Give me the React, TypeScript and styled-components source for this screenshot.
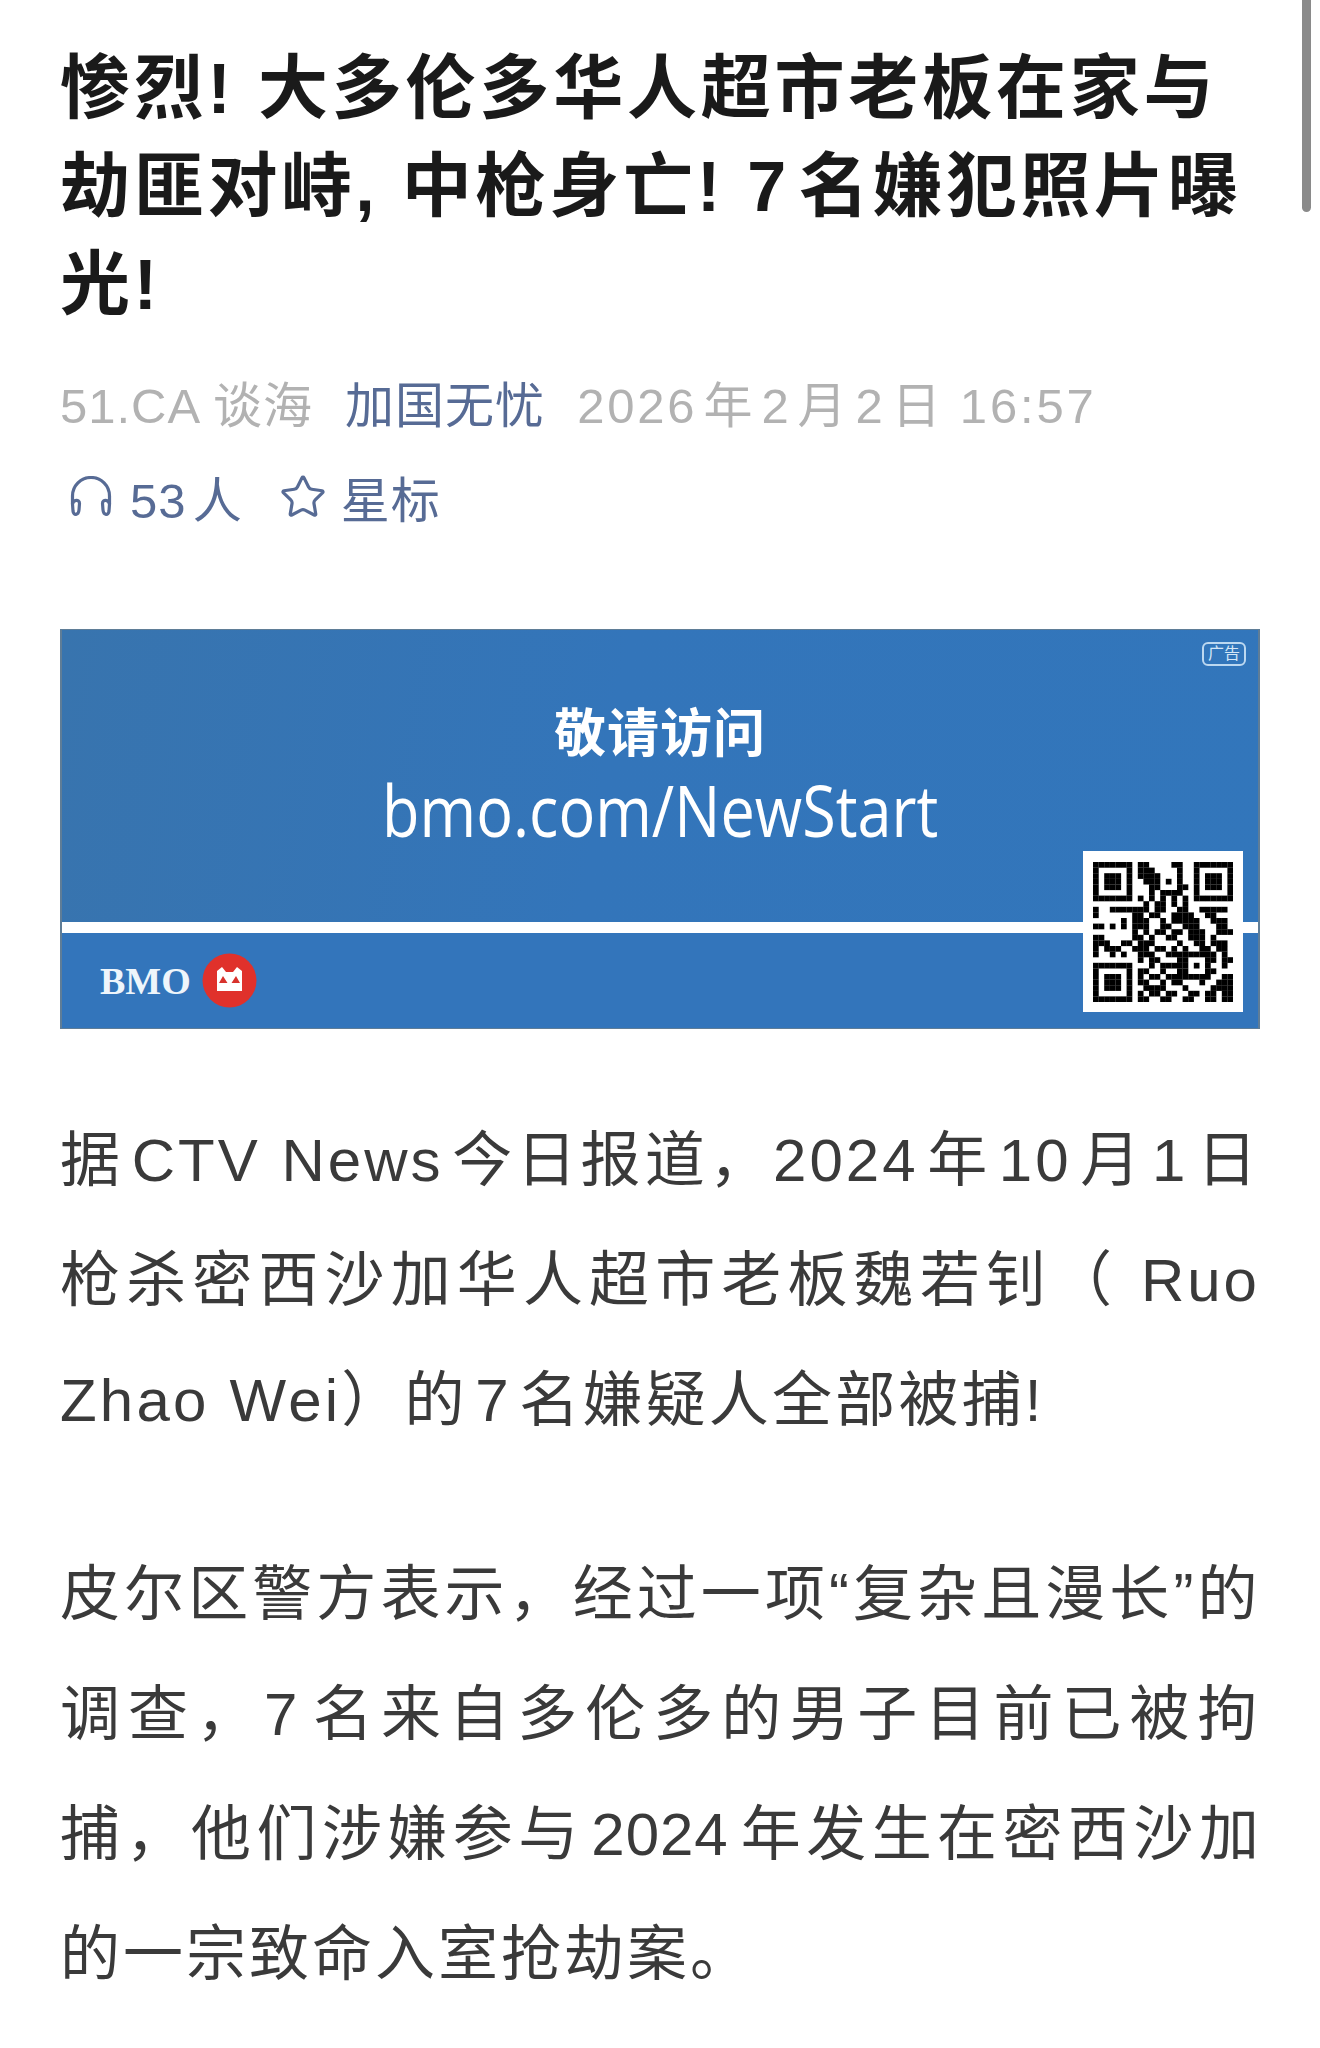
import React from 'react';
import styled, { createGlobalStyle } from 'styled-components';
import { Star } from 'lucide-react';

const GlobalStyle = createGlobalStyle`
  html, body {
    margin: 0;
    padding: 0;
    background: #fff;
    overflow: hidden;
    font-family: "Liberation Sans", "Noto Sans CJK SC", sans-serif;
    text-autospace: normal;
  }
`;

const Page = styled.div`
  position: relative;
  width: 1320px;
  height: 2048px;
  overflow: hidden;
  background: #fff;
  padding: 40px 60px 0;
  box-sizing: border-box;
`;

const ScrollThumb = styled.div`
  position: absolute;
  top: 0;
  right: 9px;
  width: 9px;
  height: 212px;
  background: #8a8a8a;
  border-radius: 0 0 5px 5px;
`;

const Title = styled.h1`
  margin: 0;
  font-size: 70px;
  line-height: 98px;
  font-weight: 700;
  letter-spacing: 3.8px;
  color: #1a1a1a;
`;

const MetaRow = styled.div`
  display: flex;
  align-items: center;
  height: 95px;
  font-size: 49px;
  letter-spacing: 1px;
  white-space: nowrap;
`;

const FirstMeta = styled(MetaRow)`
  margin-top: 20px;
`;

const MetaText = styled.span<{ $link?: boolean; $gap?: number; $spacing?: number }>`
  color: ${(p) => (p.$link ? '#576b95' : '#b2b2b2')};
  margin-right: ${(p) => p.$gap ?? 0}px;
  ${(p) => (p.$spacing ? `letter-spacing: ${p.$spacing}px;` : '')}
`;

const MetaIcon = styled.span<{ $gap: number; $left?: number }>`
  display: inline-flex;
  color: #576b95;
  margin-left: ${(p) => p.$left ?? 0}px;
  margin-right: ${(p) => p.$gap}px;
`;

const Banner = styled.div`
  position: relative;
  display: flex;
  flex-direction: column;
  height: 400px;
  margin-top: 85px;
  box-sizing: border-box;
  background: linear-gradient(100deg, #3874ae 0%, #3375ba 45%, #3276bb 100%);
  border: solid #5f7d97;
  border-width: 1px 2px;
  color: #fff;
`;

const BannerCopy = styled.div`
  height: 292px;
  display: flex;
  flex-direction: column;
  align-items: center;
  padding-top: 68px;
  box-sizing: border-box;
`;

const BannerHeading = styled.div`
  font-size: 52px;
  line-height: 72px;
  font-weight: 700;
  letter-spacing: 1px;
`;

const BannerUrl = styled.div`
  font-family: "Open Sans", "Liberation Sans", sans-serif;
  font-size: 72px;
  line-height: 78px;
  font-weight: 500;
  transform: scaleX(0.85);
  white-space: nowrap;
`;

const BannerRule = styled.div`
  height: 11px;
  background: #fff;
`;

const BannerFoot = styled.div`
  flex: 1;
  display: flex;
  align-items: center;
  padding-left: 38px;
  gap: 11px;
  background: #3375bb;
`;

const BmoWord = styled.span`
  font-family: "Liberation Serif", serif;
  font-size: 38px;
  font-weight: 700;
  color: #eef5fb;
`;

const AdBadge = styled.div`
  position: absolute;
  top: 12px;
  right: 12px;
  width: 44px;
  height: 24px;
  box-sizing: border-box;
  border: 2px solid #bcd8f0;
  border-radius: 6px;
  font-size: 16px;
  line-height: 20px;
  text-align: center;
  color: #d4e6f6;
`;

const QrCard = styled.div`
  position: absolute;
  top: 221px;
  right: 15px;
  width: 160px;
  height: 161px;
  display: flex;
  align-items: center;
  justify-content: center;
  background: #fff;
`;

const Article = styled.div`
  margin-top: 72px;
`;

const Para = styled.p`
  margin: 0 0 74px;
  font-size: 60px;
  line-height: 120px;
  color: #3a3a3a;
`;

// lines are set one by one so they break where the reference breaks
const Line = styled.span<{ $spacing: number; $fill?: boolean }>`
  display: block;
  white-space: nowrap;
  letter-spacing: ${(p) => p.$spacing}px;
  text-align: ${(p) => (p.$fill ? 'justify' : 'left')};
  text-align-last: ${(p) => (p.$fill ? 'justify' : 'left')};
`;

const Headphones = () => (
  <svg width="42" height="42" viewBox="0 0 42 42" fill="none" stroke="currentColor" strokeWidth="3.2" strokeLinecap="round" strokeLinejoin="round">
    <path d="M2.5 28 V20 A18.5 18.5 0 0 1 39.5 20 V28" />
    <path d="M2.5 28 C3 23.5 9.5 23 9.5 27.5 L9 34 C8.5 39.5 3.5 40 3 35 Z" />
    <path d="M39.5 28 C39 23.5 32.5 23 32.5 27.5 L33 34 C33.5 39.5 38.5 40 39 35 Z" />
  </svg>
);

const BmoMark = () => (
  <svg width="55" height="55" viewBox="0 0 55 55">
    <circle cx="27.5" cy="27.5" r="27" fill="#e0312b" />
    <path d="M15 18 L20 14 L24 19 H31 L35 14 L40 18 V38 H15 Z" fill="#fff" />
    <path d="M17 30 L21 23 L25.5 30 Z M29.5 30 L34 23 L38 30 Z" fill="#d8322c" />
  </svg>
);

const QR_ROWS = [
  '1111111011000011001111111',
  '1000001011100001001000001',
  '1011101011110001001011101',
  '1011101001110101001011101',
  '1011101000110001101011101',
  '1000001000101111001000001',
  '1111111010101010101111111',
  '0000000001011010100000000',
  '1001111111011001100111110',
  '1000000110110011110011000',
  '0000010111001011111001110',
  '1101010111001100111000110',
  '0000000101011011011100111',
  '1100000110100110011101000',
  '1110011011100001001101110',
  '1011100111011010100110110',
  '1001010011100111111111010',
  '0000000010110001100011011',
  '1111111000101111101010010',
  '1000001011001001100011000',
  '1011101010110111111110011',
  '1011101011001011000100111',
  '1011101001111000100001111',
  '1000001010110110011011011',
  '1111111011001100110011011',
];

const QrCode = () => (
  <svg width="140" height="140" viewBox="0 0 25 25" style={{ filter: 'blur(0.5px)' }}>
    {QR_ROWS.flatMap((row, y) =>
      row.split('').map((cell, x) =>
        cell === '1' ? <rect key={`${x}-${y}`} x={x} y={y} width="1.02" height="1.02" fill="#000" /> : null
      )
    )}
  </svg>
);

export default function App() {
  return (
    <Page>
      <GlobalStyle />
      <ScrollThumb />
      <Title>惨烈! 大多伦多华人超市老板在家与劫匪对峙, 中枪身亡! 7名嫌犯照片曝光!</Title>
      <FirstMeta>
        <MetaText $gap={32}>51.CA 谈海</MetaText>
        <MetaText $link $gap={32}>加国无忧</MetaText>
        <MetaText $spacing={2.8}>2026年2月2日 16:57</MetaText>
      </FirstMeta>
      <MetaRow>
        <MetaIcon $left={10} $gap={18}><Headphones /></MetaIcon>
        <MetaText $link $gap={36}>53人</MetaText>
        <MetaIcon $gap={14}><Star size={48} strokeWidth={1.6} /></MetaIcon>
        <MetaText $link>星标</MetaText>
      </MetaRow>
      <Banner>
        <BannerCopy>
          <BannerHeading>敬请访问</BannerHeading>
          <BannerUrl>bmo.com/NewStart</BannerUrl>
        </BannerCopy>
        <BannerRule />
        <BannerFoot>
          <BmoWord>BMO</BmoWord>
          <BmoMark />
        </BannerFoot>
        <AdBadge>广告</AdBadge>
        <QrCard><QrCode /></QrCard>
      </Banner>
      <Article>
        <Para>
          <Line $fill $spacing={3}>据CTV News今日报道，2024年10月1日</Line>
          <Line $fill $spacing={3}>枪杀密西沙加华人超市老板魏若钊（ Ruo</Line>
          <Line $spacing={3.2}>Zhao Wei）的7名嫌疑人全部被捕!</Line>
        </Para>
        <Para>
          <Line $fill $spacing={2.5}>皮尔区警方表示，经过一项“复杂且漫长”的</Line>
          <Line $fill $spacing={2.5}>调查，7名来自多伦多的男子目前已被拘</Line>
          <Line $fill $spacing={1}>捕，他们涉嫌参与2024年发生在密西沙加</Line>
          <Line $spacing={3}>的一宗致命入室抢劫案。</Line>
        </Para>
      </Article>
    </Page>
  );
}
